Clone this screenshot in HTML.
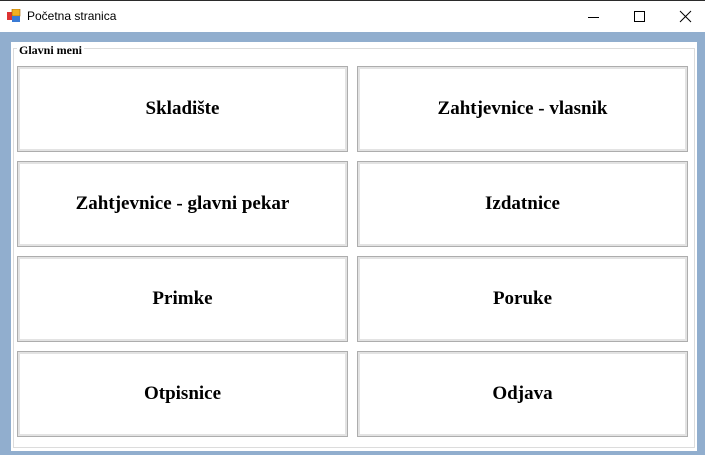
<!DOCTYPE html><html><head><style>
body{margin:0;width:705px;height:455px;background:#fff;position:relative;overflow:hidden;font-family:"Liberation Sans",sans-serif}
.top{position:absolute;left:0;top:0;width:705px;height:1px;background:#2b2b2b}
.title{position:absolute;left:27px;top:9px;font-size:12px;color:#000}
.bg{position:absolute;left:0;top:32px;width:705px;height:423px;background:#91aece}
.grp{position:absolute;left:11px;top:42px;width:686px;height:409px;background:#fff}
.gl{position:absolute;left:13px;top:48px;width:682px;height:400px;border:1px solid #dcdcdc;box-sizing:border-box}
.gt{position:absolute;left:17px;top:43px;background:#fff;padding:0 2px;font:bold 12px "Liberation Serif",serif}
.b{position:absolute;width:331px;height:86px;box-sizing:border-box;border:1px solid #adadad;box-shadow:inset 0 0 0 2px #e3e3e3;background:#fff;display:flex;align-items:center;justify-content:center;font:bold 19px "Liberation Serif",serif;color:#000}
</style></head><body>
<div class="top"></div>
<svg style="position:absolute;left:7px;top:9px" width="14" height="14"><rect x="0" y="3" width="6" height="8" fill="#d33"/><rect x="5" y="0" width="8" height="7" fill="#f0b020" stroke="#a06000" stroke-width=".6"/><rect x="5" y="7" width="8" height="6" fill="#3a7bd5"/></svg>
<div class="title">Početna stranica</div>
<svg style="position:absolute;left:588px;top:10px" width="110" height="14"><line x1="0" y1="7.5" x2="11" y2="7.5" stroke="#000"/><rect x="46.5" y="1.5" width="10" height="10" fill="none" stroke="#000"/><path d="M92 1L103 12M103 1L92 12" stroke="#000"/></svg>
<div class="bg"></div>
<div class="grp"></div>
<div class="gl"></div>
<div class="gt">Glavni meni</div>
<div class="b" style="left:17px;top:66px">Skladište</div>
<div class="b" style="left:357px;top:66px">Zahtjevnice - vlasnik</div>
<div class="b" style="left:17px;top:161px">Zahtjevnice - glavni pekar</div>
<div class="b" style="left:357px;top:161px">Izdatnice</div>
<div class="b" style="left:17px;top:256px">Primke</div>
<div class="b" style="left:357px;top:256px">Poruke</div>
<div class="b" style="left:17px;top:351px">Otpisnice</div>
<div class="b" style="left:357px;top:351px">Odjava</div>
</body></html>
